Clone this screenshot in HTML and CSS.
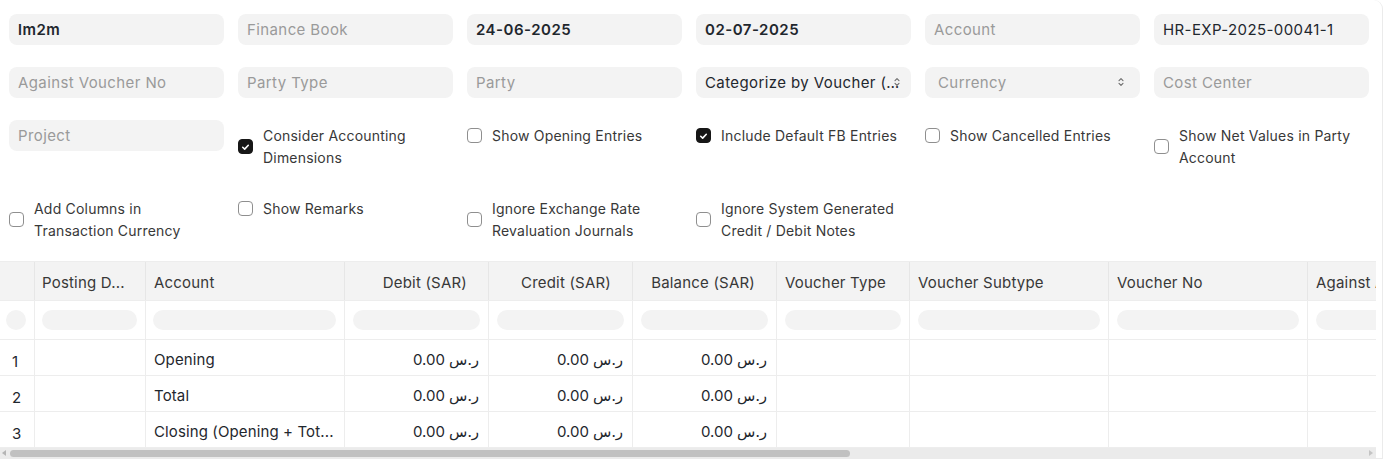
FILE: index.html
```html
<!DOCTYPE html>
<html lang="en">
<head>
<meta charset="utf-8">
<title>General Ledger</title>
<link rel="stylesheet" href="styles.css">
</head>
<body>
<div class="card">
  <div class="filters">
    <div class="field value strong">lm2m</div>
    <div class="field placeholder">Finance Book</div>
    <div class="field value strong">24-06-2025</div>
    <div class="field value strong">02-07-2025</div>
    <div class="field placeholder">Account</div>
    <div class="field value">HR-EXP-2025-00041-1</div>

    <div class="field placeholder">Against Voucher No</div>
    <div class="field placeholder">Party Type</div>
    <div class="field placeholder">Party</div>
    <div class="field value select"><span class="sel-text">Categorize by Voucher (Consolidated)</span>
      <svg class="sel-icon" width="8" height="12" viewBox="0 0 8 12"><path d="M2 4.6 L4 2.6 L6 4.6 M2 7.4 L4 9.4 L6 7.4" fill="none" stroke="#6b6b6b" stroke-width="1.1" stroke-linecap="round" stroke-linejoin="round"/></svg>
    </div>
    <div class="field placeholder select currency"><span class="sel-text">Currency</span>
      <svg class="sel-icon cur" width="8" height="12" viewBox="0 0 8 12"><path d="M2 4.6 L4 2.6 L6 4.6 M2 7.4 L4 9.4 L6 7.4" fill="none" stroke="#6b6b6b" stroke-width="1.1" stroke-linecap="round" stroke-linejoin="round"/></svg>
    </div>
    <div class="field placeholder">Cost Center</div>

    <div class="field placeholder">Project</div>
    <label class="check"><span class="box checked"><svg width="14" height="14" viewBox="0 0 14 14"><path d="M4 7.3 L6.1 9.3 L10 5.1" fill="none" stroke="#fff" stroke-width="1.7" stroke-linecap="round" stroke-linejoin="round"/></svg></span><span class="lbl">Consider Accounting Dimensions</span></label>
    <label class="check"><span class="box"></span><span class="lbl">Show Opening Entries</span></label>
    <label class="check"><span class="box checked"><svg width="14" height="14" viewBox="0 0 14 14"><path d="M4 7.3 L6.1 9.3 L10 5.1" fill="none" stroke="#fff" stroke-width="1.7" stroke-linecap="round" stroke-linejoin="round"/></svg></span><span class="lbl">Include Default FB Entries</span></label>
    <label class="check"><span class="box"></span><span class="lbl">Show Cancelled Entries</span></label>
    <label class="check"><span class="box"></span><span class="lbl">Show Net Values in Party Account</span></label>

    <label class="check"><span class="box"></span><span class="lbl">Add Columns in Transaction Currency</span></label>
    <label class="check"><span class="box"></span><span class="lbl">Show Remarks</span></label>
    <label class="check"><span class="box"></span><span class="lbl">Ignore Exchange Rate Revaluation Journals</span></label>
    <label class="check"><span class="box"></span><span class="lbl">Ignore System Generated Credit / Debit Notes</span></label>
  </div>

  <div class="table-wrap">
    <div class="dt">
      <div class="row head">
        <div class="cell"></div>
        <div class="cell">Posting D...</div>
        <div class="cell">Account</div>
        <div class="cell num">Debit (SAR)</div>
        <div class="cell num">Credit (SAR)</div>
        <div class="cell num">Balance (SAR)</div>
        <div class="cell">Voucher Type</div>
        <div class="cell">Voucher Subtype</div>
        <div class="cell">Voucher No</div>
        <div class="cell">Against Account</div>
      </div>
      <div class="row filt">
        <div class="cell"><span class="pill round"></span></div>
        <div class="cell"><span class="pill"></span></div>
        <div class="cell"><span class="pill"></span></div>
        <div class="cell"><span class="pill"></span></div>
        <div class="cell"><span class="pill"></span></div>
        <div class="cell"><span class="pill"></span></div>
        <div class="cell"><span class="pill"></span></div>
        <div class="cell"><span class="pill"></span></div>
        <div class="cell"><span class="pill"></span></div>
        <div class="cell"><span class="pill"></span></div>
      </div>
      <div class="row data">
        <div class="cell idx">1</div>
        <div class="cell"></div>
        <div class="cell">Opening</div>
        <div class="cell num">0.00 ر.س</div>
        <div class="cell num">0.00 ر.س</div>
        <div class="cell num">0.00 ر.س</div>
        <div class="cell"></div>
        <div class="cell"></div>
        <div class="cell"></div>
        <div class="cell"></div>
      </div>
      <div class="row data">
        <div class="cell idx">2</div>
        <div class="cell"></div>
        <div class="cell">Total</div>
        <div class="cell num">0.00 ر.س</div>
        <div class="cell num">0.00 ر.س</div>
        <div class="cell num">0.00 ر.س</div>
        <div class="cell"></div>
        <div class="cell"></div>
        <div class="cell"></div>
        <div class="cell"></div>
      </div>
      <div class="row data">
        <div class="cell idx">3</div>
        <div class="cell"></div>
        <div class="cell">Closing (Opening + Tot...</div>
        <div class="cell num">0.00 ر.س</div>
        <div class="cell num">0.00 ر.س</div>
        <div class="cell num">0.00 ر.س</div>
        <div class="cell"></div>
        <div class="cell"></div>
        <div class="cell"></div>
        <div class="cell"></div>
      </div>
    </div>
    <div class="hscroll">
      <span class="arrow left"></span>
      <span class="thumb"></span>
      <span class="spacer"></span>
      <span class="arrow right"></span>
    </div>
  </div>
</div>
</body>
</html>
```

FILE: styles.css
```css
* { box-sizing: border-box; }

html, body {
  margin: 0;
  padding: 0;
  background: #ffffff;
  font-family: Inter, "Noto Sans", "DejaVu Sans", sans-serif;
  font-size: 14px;
  color: #1f272e;
}

.card {
  width: 1383px;
  height: 459px;
  border-right: 1px solid #ebebeb;
  border-bottom: 1px solid #ebebeb;
  border-top-right-radius: 9px;
  padding-right: 6px;
  background: #fff;
}

.filters {
  display: grid;
  grid-template-columns: repeat(6, 215px);
  column-gap: 14px;
  row-gap: 22px;
  padding: 14px 0 17px 9px;
  align-items: start;
}

.field {
  height: 31px;
  border-radius: 8px;
  background: #f3f3f3;
  padding: 0 9px;
  line-height: 31px;
  white-space: nowrap;
  overflow: hidden;
  font-size: 15px;
  letter-spacing: 0.4px;
}

.placeholder { color: #9a9a9a; }
.value { color: #1f272e; }
.strong { font-weight: 600; color: #1f272e; letter-spacing: 0.5px; }

.select {
  position: relative;
  padding-right: 10px;
}

.select.currency { padding-left: 13px; }

.sel-text {
  display: block;
  overflow: hidden;
  text-overflow: ellipsis;
  white-space: nowrap;
}

.sel-icon {
  position: absolute;
  right: 10px;
  top: 9px;
}

.sel-icon.cur { right: 15px; }

.check {
  display: flex;
  align-items: center;
  gap: 10px;
  padding-top: 5px;
  padding-bottom: 3px;
  padding-right: 10px;
  font-size: 14px;
  line-height: 21.5px;
  letter-spacing: 0.2px;
  color: #383838;
}

.box {
  flex: none;
  width: 15px;
  height: 15px;
  border: 1px solid #8f8f8f;
  border-radius: 4px;
  background: #fff;
  display: flex;
  align-items: center;
  justify-content: center;
}

.box.checked {
  background: #171717;
  border-color: #171717;
}

.box svg { display: block; }

.lbl { display: block; }

.table-wrap {
  width: 1376px;
  overflow: hidden;
  border-top: 1px solid #ededed;
}

.dt {
  width: 1700px;
}

.row {
  display: grid;
  grid-template-columns: 35px 111px 199px 144px 144px 144px 133px 199px 199px 199px 193px;
  border-bottom: 1px solid #ededed;
}

.cell {
  border-right: 1px solid #ededed;
  padding: 0 8px;
  white-space: nowrap;
  overflow: hidden;
}

.head {
  height: 39px;
  background: #f3f3f3;
  color: #383838;
  font-size: 15px;
  letter-spacing: 0.2px;
}

.head .cell {
  line-height: 41px;
  border-right-color: #e6e6e6;
}

.head .cell:nth-child(2) { padding-left: 7px; }

.head .num { text-align: right; padding-right: 21px; }

.filt {
  height: 39px;
  background: #fff;
}

.filt .cell {
  display: flex;
  align-items: center;
  padding: 0 8px 0 7px;
}

.pill {
  display: block;
  width: 100%;
  height: 20px;
  border-radius: 10px;
  background: #f3f3f3;
}

.filt .cell:nth-child(n+4) .pill { margin-left: 1px; }

.pill.round {
  width: 20px;
  margin-left: -1px;
}

.data {
  height: 36px;
  font-size: 15px;
  letter-spacing: 0.12px;
}

.data .cell {
  line-height: 35px;
  padding-top: 2px;
  color: #1f272e;
}

.data .num {
  text-align: right;
  padding-right: 9px;
}

.data .idx {
  padding-left: 12px;
  padding-top: 4px;
}

.hscroll {
  display: flex;
  align-items: center;
  height: 10px;
  background: #ebebeb;
}

.arrow {
  width: 0;
  height: 0;
  border-top: 3px solid transparent;
  border-bottom: 3px solid transparent;
}

.arrow.left {
  border-right: 4px solid #b5b5b5;
  margin-left: 2px;
  margin-right: 4px;
}

.arrow.right {
  border-left: 4px solid #c4c4c4;
  margin-right: 3px;
}

.thumb {
  width: 840px;
  height: 7px;
  border-radius: 4px;
  background: #c1c1c1;
}

.spacer { flex: 1; }
```
